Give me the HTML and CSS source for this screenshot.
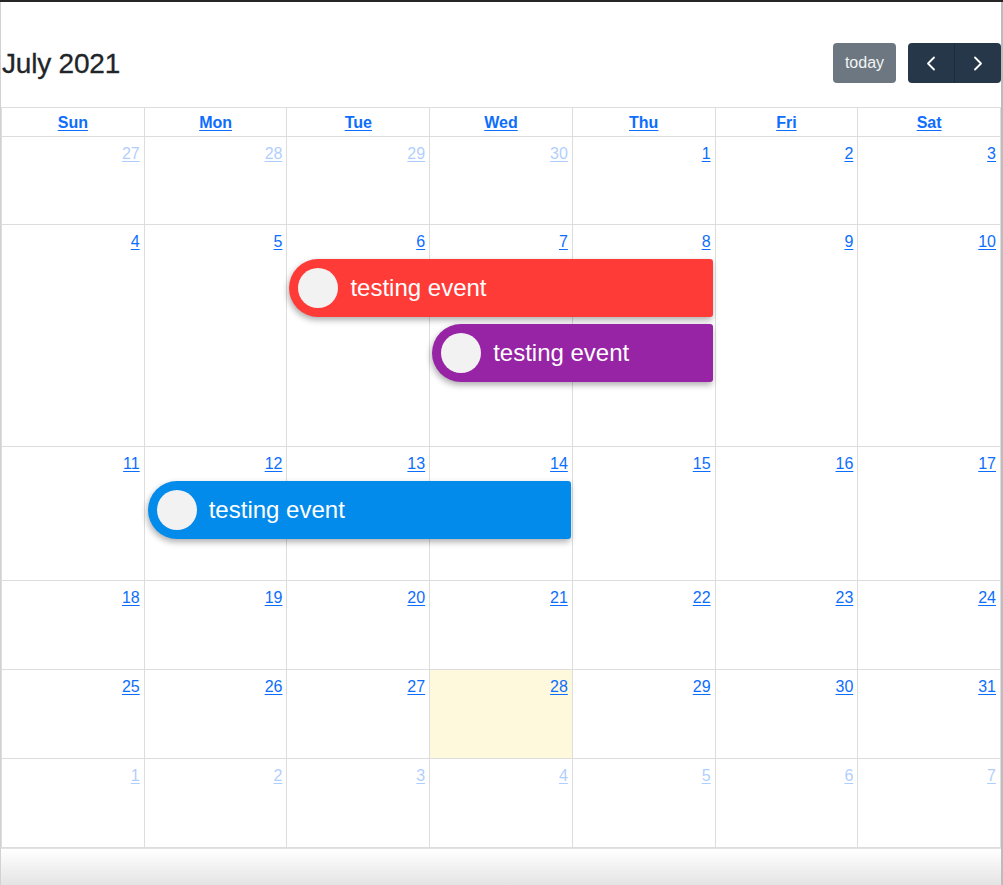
FILE: index.html
```html
<!DOCTYPE html>
<html lang="en">
<head>
<meta charset="utf-8">
<title>July 2021</title>
<link rel="stylesheet" href="styles.css">
</head>
<body>
<div class="topline"></div>
<div class="frame">
  <div class="cal">
    <div class="toolbar">
      <h2 class="title">July 2021</h2>
      <div class="actions">
        <button class="btn today">today</button>
        <div class="btn-group">
          <button class="btn nav" aria-label="prev"><svg width="10" height="15" viewBox="0 0 10 15"><polyline points="8,1.5 2,7.5 8,13.5" fill="none" stroke="#fff" stroke-width="1.8" stroke-linecap="round" stroke-linejoin="round"/></svg></button>
          <button class="btn nav" aria-label="next"><svg width="10" height="15" viewBox="0 0 10 15"><polyline points="2,1.5 8,7.5 2,13.5" fill="none" stroke="#fff" stroke-width="1.8" stroke-linecap="round" stroke-linejoin="round"/></svg></button>
        </div>
      </div>
    </div>
    <div class="grid">
      <div class="head">
        <div class="hcell"><a>Sun</a></div>
        <div class="hcell"><a>Mon</a></div>
        <div class="hcell"><a>Tue</a></div>
        <div class="hcell"><a>Wed</a></div>
        <div class="hcell"><a>Thu</a></div>
        <div class="hcell"><a>Fri</a></div>
        <div class="hcell"><a>Sat</a></div>
      </div>
      <div class="week h88">
        <div class="day c1 other"><a>27</a></div>
        <div class="day c2 other"><a>28</a></div>
        <div class="day c3 other"><a>29</a></div>
        <div class="day c4 other"><a>30</a></div>
        <div class="day c5"><a>1</a></div>
        <div class="day c6"><a>2</a></div>
        <div class="day c7"><a>3</a></div>
      </div>
      <div class="week h222">
        <div class="day c1"><a>4</a></div>
        <div class="day c2"><a>5</a></div>
        <div class="day c3"><a>6</a></div>
        <div class="day c4"><a>7</a></div>
        <div class="day c5"><a>8</a></div>
        <div class="day c6"><a>9</a></div>
        <div class="day c7"><a>10</a></div>
        <div class="event red r2 s3-6"><span class="dot"></span><span class="etext">testing event</span></div>
        <div class="event purple r3 s4-6"><span class="dot"></span><span class="etext">testing event</span></div>
      </div>
      <div class="week h134">
        <div class="day c1"><a>11</a></div>
        <div class="day c2"><a>12</a></div>
        <div class="day c3"><a>13</a></div>
        <div class="day c4"><a>14</a></div>
        <div class="day c5"><a>15</a></div>
        <div class="day c6"><a>16</a></div>
        <div class="day c7"><a>17</a></div>
        <div class="event blue r2 s2-5"><span class="dot"></span><span class="etext">testing event</span></div>
      </div>
      <div class="week h89">
        <div class="day c1"><a>18</a></div>
        <div class="day c2"><a>19</a></div>
        <div class="day c3"><a>20</a></div>
        <div class="day c4"><a>21</a></div>
        <div class="day c5"><a>22</a></div>
        <div class="day c6"><a>23</a></div>
        <div class="day c7"><a>24</a></div>
      </div>
      <div class="week h89">
        <div class="day c1"><a>25</a></div>
        <div class="day c2"><a>26</a></div>
        <div class="day c3"><a>27</a></div>
        <div class="day c4 today-cell"><a>28</a></div>
        <div class="day c5"><a>29</a></div>
        <div class="day c6"><a>30</a></div>
        <div class="day c7"><a>31</a></div>
      </div>
      <div class="week h89">
        <div class="day c1 other"><a>1</a></div>
        <div class="day c2 other"><a>2</a></div>
        <div class="day c3 other"><a>3</a></div>
        <div class="day c4 other"><a>4</a></div>
        <div class="day c5 other"><a>5</a></div>
        <div class="day c6 other"><a>6</a></div>
        <div class="day c7 other"><a>7</a></div>
      </div>
    </div>
  </div>
  <div class="footer"></div>
</div>
</body>
</html>
```
FILE: styles.css
```css
* { box-sizing: border-box; }
html, body { margin: 0; padding: 0; background: #fff; }
body {
  width: 1003px;
  height: 885px;
  overflow: hidden;
  font-family: "Liberation Sans", Arial, Helvetica, sans-serif;
  color: #212529;
}
.topline { height: 2px; background: #262626; }
.frame {
  border-left: 1px solid #d2d2d2;
  border-right: 2px solid #bcbcbc;
  height: 883px;
  display: flex;
  flex-direction: column;
}
.cal { padding-top: 41px; }
.toolbar {
  display: flex;
  align-items: center;
  justify-content: space-between;
  height: 40px;
  margin-bottom: 24px;
}
.title {
  margin: 0;
  font-size: 28px;
  font-weight: 400;
  letter-spacing: -0.2px;
  line-height: 40px;
  padding-left: 1px;
  padding-top: 2px;
  -webkit-text-stroke: 0.3px #212529;
}
.actions { display: flex; align-items: center; gap: 12px; height: 40px; }
.btn {
  border: 0;
  margin: 0;
  font-family: inherit;
  font-size: 16px;
  color: #fff;
  height: 40px;
  display: flex;
  align-items: center;
  justify-content: center;
}
.today {
  width: 63px;
  background: #6c7781;
  color: #f3f4f5;
  border-radius: 4px;
  padding: 0;
}
.btn-group { display: flex; border-radius: 4px; overflow: hidden; }
.nav { width: 46px; background: #26374a; padding: 0; }
.nav + .nav { width: 47px; border-left: 1px solid #1d2a38; }

.grid { border-top: 1px solid #ddd; border-left: 1px solid #ddd; }
.head, .week {
  display: grid;
  grid-template-columns: repeat(7, 1fr);
}
.hcell {
  border-right: 1px solid #ddd;
  border-bottom: 1px solid #ddd;
  text-align: center;
  padding: 3px 4px 1px;
  height: 29px;
  line-height: 24px;
  font-weight: 700;
  font-size: 16px;
}
a { color: #0d6efd; text-decoration: underline; text-underline-offset: 2px; }
.week { grid-template-rows: 32px auto auto 1fr; }
.h88 { height: 88px; }
.h222 { height: 222px; }
.h134 { height: 134px; }
.h89 { height: 89px; }
.day {
  grid-row: 1 / -1;
  border-right: 1px solid #ddd;
  border-bottom: 1px solid #ddd;
  text-align: right;
  padding: 5px 4px 0 4px;
  font-size: 16px;
  line-height: 24px;
}
.c1 { grid-column: 1; } .c2 { grid-column: 2; } .c3 { grid-column: 3; }
.c4 { grid-column: 4; } .c5 { grid-column: 5; } .c6 { grid-column: 6; }
.c7 { grid-column: 7; }
.other a { opacity: 0.33; }
.today-cell { background: #fef9dc; }

.event {
  position: relative;
  z-index: 1;
  height: 58px;
  display: flex;
  align-items: center;
  gap: 12px;
  padding-left: 9px;
  border-radius: 29px 3px 3px 29px;
  color: #fff;
  font-size: 24px;
  box-shadow: -1px 3px 6px rgba(0, 0, 0, 0.32);
  margin: 0 3px 0 2px;
}
.r2 { grid-row: 2; margin-top: 2px; }
.r3 { grid-row: 3; margin-top: 7px; }
.s3-6 { grid-column: 3 / 6; }
.s4-6 { grid-column: 4 / 6; }
.s2-5 { grid-column: 2 / 5; margin-left: 3px; margin-right: 2px; }
.red { background: #ff3b38; }
.purple { background: #9624a5; }
.blue { background: #038bec; }
.dot {
  width: 40px;
  height: 40px;
  border-radius: 50%;
  background: #f2f2f2;
  flex: none;
}
.etext { white-space: nowrap; }

.footer {
  flex: 1;
  border-top: 1px solid #e2e2e2;
  background: linear-gradient(#ffffff, #e4e4e4);
}
```
